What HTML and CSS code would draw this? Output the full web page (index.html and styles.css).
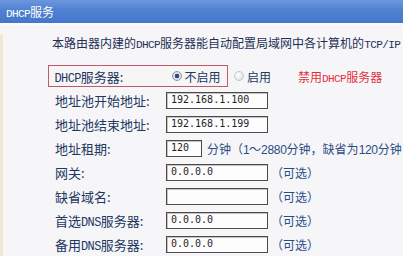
FILE: index.html
```html
<!DOCTYPE html>
<html lang="zh-CN">
<head>
<meta charset="utf-8">
<title>DHCP服务</title>
<link rel="stylesheet" href="styles.css">
</head>
<body>
<div class="header"><span class="lat">DHCP</span>服务</div>
<div class="content">
  <div class="intro">本路由器内建的<span class="lat">DHCP</span>服务器能自动配置局域网中各计算机的<span class="lat">TCP/IP</span></div>
  <div class="row first">
    <div class="redbox">
      <span class="label inbox"><span class="lat">DHCP</span>服务器:</span>
      <span class="radio checked"></span>
      <span class="opt">不启用</span>
    </div>
    <span class="radio second"></span>
    <span class="opt">启用</span>
    <span class="note"><span>禁用</span><span class="lat">DHCP</span><span>服务器</span></span>
  </div>
  <div class="row">
    <span class="label">地址池开始地址:</span>
    <span class="field">192.168.1.100</span>
  </div>
  <div class="row">
    <span class="label">地址池结束地址:</span>
    <span class="field">192.168.1.199</span>
  </div>
  <div class="row">
    <span class="label">地址租期:</span>
    <span class="field short">120</span>
    <span class="unit">分钟</span>
    <span class="hint">（<span class="num">1～2880</span>分钟，缺省为<span class="num">120</span>分钟</span>
  </div>
  <div class="row">
    <span class="label">网关:</span>
    <span class="field">0.0.0.0</span>
    <span class="opt2">（可选）</span>
  </div>
  <div class="row">
    <span class="label">缺省域名:</span>
    <span class="field"></span>
    <span class="opt2">（可选）</span>
  </div>
  <div class="row">
    <span class="label">首选<span class="lat">DNS</span>服务器:</span>
    <span class="field">0.0.0.0</span>
    <span class="opt2">（可选）</span>
  </div>
  <div class="row">
    <span class="label">备用<span class="lat">DNS</span>服务器:</span>
    <span class="field">0.0.0.0</span>
    <span class="opt2">（可选）</span>
  </div>
</div>
</body>
</html>
```
FILE: styles.css
```css
html, body {
  margin: 0;
  padding: 0;
}
body {
  width: 403px;
  height: 256px;
  overflow: hidden;
  background: #f6f6f8;
  font-family: "Noto Sans CJK SC", "Noto Sans", sans-serif;
  color: #22365f;
}
.lat {
  font-family: "Liberation Mono", monospace;
  font-size: 0.92em;
  letter-spacing: -0.6px;
}
.num {
  font-family: "Liberation Sans", sans-serif;
  letter-spacing: -0.3px;
}
.header {
  height: 23px;
  line-height: 23px;
  padding-left: 6px;
  font-size: 12px;
  color: #ffffff;
  background: linear-gradient(to bottom, #6b97dc 0%, #4f80d2 45%, #4477cb 100%);
  border-bottom: 2px solid #fbfbfd;
}
.content {
  border-left: 3px solid #efe8d2;
  padding-left: 45px;
  height: 231px;
}
.intro {
  margin-top: 10px;
  padding-left: 4px;
  font-size: 12px;
  line-height: 16px;
  white-space: nowrap;
  color: #1f2f55;
}
.row {
  display: flex;
  align-items: center;
  height: 24px;
  white-space: nowrap;
}
.row > * {
  flex-shrink: 0;
}
.row.first {
  margin-top: 12px;
  height: 22px;
  margin-bottom: 1px;
}
.redbox {
  display: flex;
  align-items: center;
  box-sizing: border-box;
  width: 180px;
  height: 22px;
  border: 1.5px solid #c05a6a;
  background: #f8f5f6;
}
.label {
  box-sizing: border-box;
  width: 118px;
  padding-left: 7px;
  font-size: 13px;
  color: #22365f;
}
.label.inbox {
  width: 122.5px;
  padding-left: 5.5px;
}
.radio {
  display: inline-block;
  box-sizing: border-box;
  width: 10px;
  height: 10px;
  border-radius: 50%;
  border: 1px solid #c4c8cf;
  background: radial-gradient(circle at 40% 35%, #ffffff 0%, #dfe2e7 80%);
}
.radio.checked {
  border-color: #8e96a3;
  background: radial-gradient(circle, #2b4a86 0 2px, #e4e8ef 2.6px, #c9ced8 100%);
}
.radio.second {
  margin-left: 6px;
}
.opt {
  margin-left: 3px;
  font-size: 12px;
  color: #22365f;
}
.note {
  margin-left: 27px;
  font-size: 12px;
  color: #e5303c;
}
.field {
  box-sizing: border-box;
  width: 102px;
  height: 17px;
  line-height: 14px;
  padding-left: 4px;
  border: 1px solid #4a4a4a;
  box-shadow: inset 1px 1px 0 #c4c4c4;
  background: #fdfdfd;
  font-family: "DejaVu Sans Mono", monospace;
  font-size: 10px;
  color: #1e1e1e;
}
.field.short {
  width: 36px;
}
.unit {
  margin-left: 5px;
  font-size: 12px;
  color: #2b4c86;
}
.hint {
  margin-left: 0px;
  font-size: 12px;
  color: #2b4c86;
}
.opt2 {
  margin-left: 3px;
  font-size: 12px;
  color: #2b4c86;
}
```
